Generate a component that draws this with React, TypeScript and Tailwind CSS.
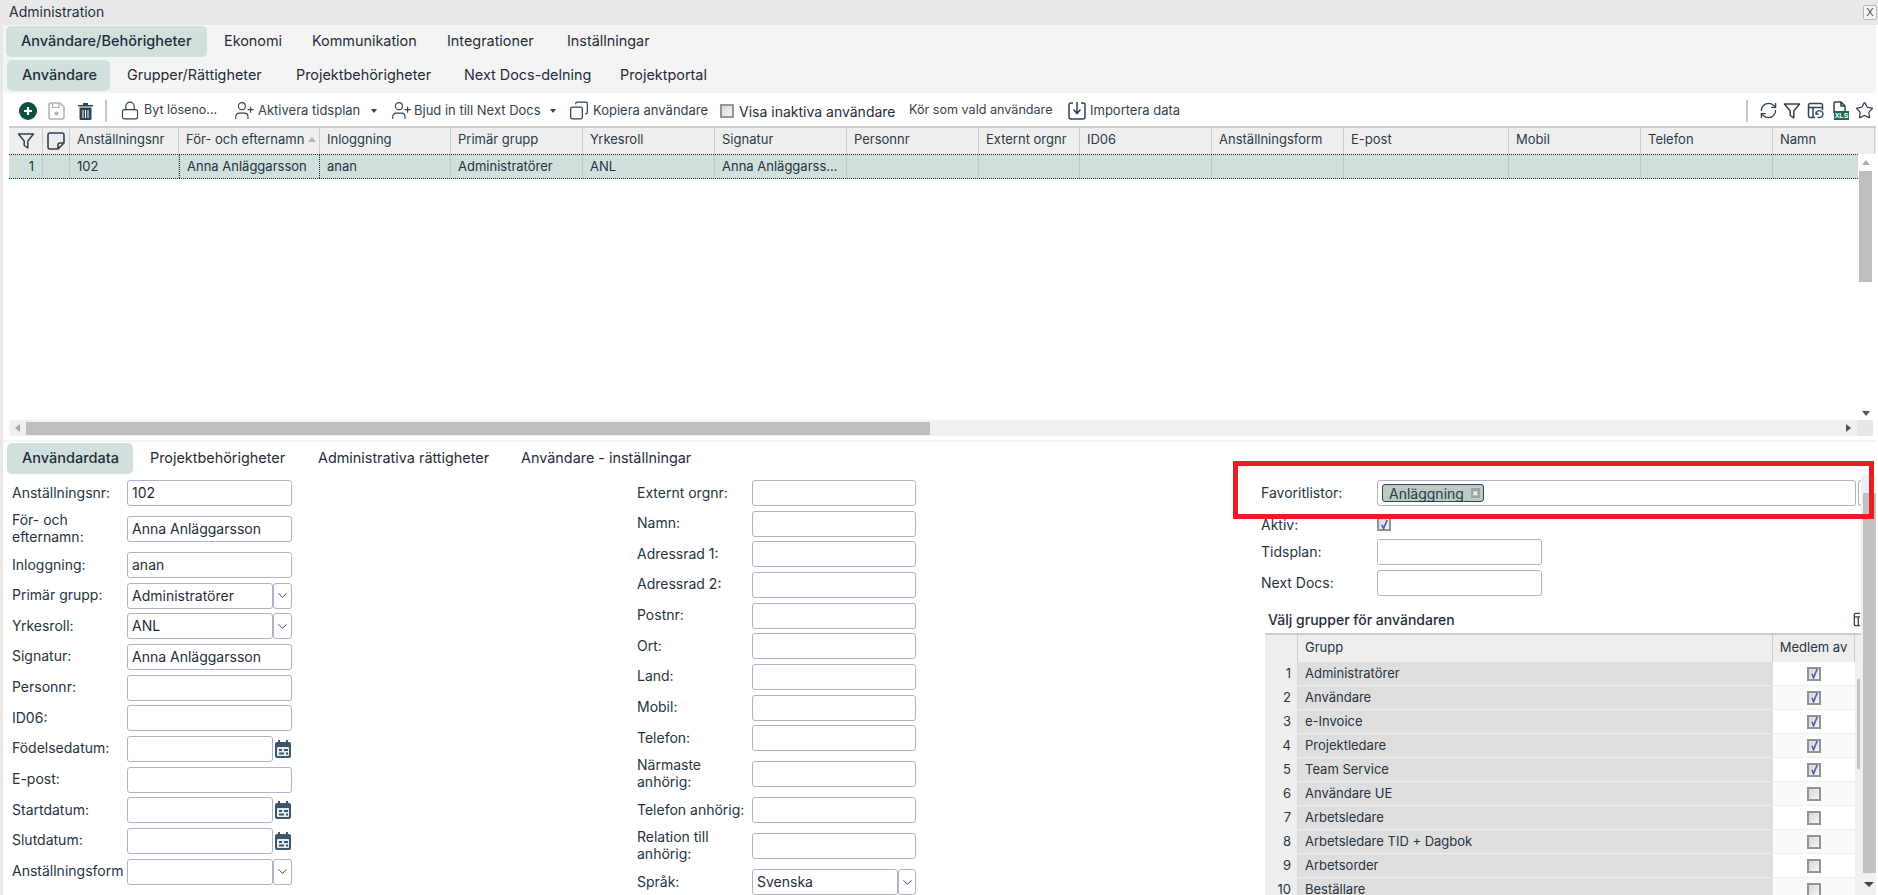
import { ChevronDown, Lock, UserPlus, Copy, RefreshCw, Star } from 'lucide-react';

const gridCols = [
  { label: 'Anställningsnr', value: '102', cls: 'w-[109px]' },
  { label: 'För- och efternamn', value: 'Anna Anläggarsson', cls: 'w-[141px]', sorted: true },
  { label: 'Inloggning', value: 'anan', cls: 'w-[131px]' },
  { label: 'Primär grupp', value: 'Administratörer', cls: 'w-[132px]' },
  { label: 'Yrkesroll', value: 'ANL', cls: 'w-[132px]' },
  { label: 'Signatur', value: 'Anna Anläggarss...', cls: 'w-[132px]' },
  { label: 'Personnr', value: '', cls: 'w-[132px]' },
  { label: 'Externt orgnr', value: '', cls: 'w-[101px]' },
  { label: 'ID06', value: '', cls: 'w-[132px]' },
  { label: 'Anställningsform', value: '', cls: 'w-[132px]' },
  { label: 'E-post', value: '', cls: 'w-[165px]' },
  { label: 'Mobil', value: '', cls: 'w-[132px]' },
  { label: 'Telefon', value: '', cls: 'w-[132px]' },
  { label: 'Namn', value: '', cls: 'w-[102px]' },
];

const groups = [
  { name: 'Administratörer', on: true },
  { name: 'Användare', on: true },
  { name: 'e-Invoice', on: true },
  { name: 'Projektledare', on: true },
  { name: 'Team Service', on: true },
  { name: 'Användare UE', on: false },
  { name: 'Arbetsledare', on: false },
  { name: 'Arbetsledare TID + Dagbok', on: false },
  { name: 'Arbetsorder', on: false },
  { name: 'Beställare', on: false },
];

type FieldKind = 'text' | 'select' | 'date';

const leftFields: { label: string; value?: string; kind?: FieldKind; tall?: boolean }[] = [
  { label: 'Anställningsnr:', value: '102', tall: true },
  { label: 'För- och efternamn:', value: 'Anna Anläggarsson', tall: true },
  { label: 'Inloggning:', value: 'anan' },
  { label: 'Primär grupp:', value: 'Administratörer', kind: 'select' },
  { label: 'Yrkesroll:', value: 'ANL', kind: 'select' },
  { label: 'Signatur:', value: 'Anna Anläggarsson' },
  { label: 'Personnr:' },
  { label: 'ID06:' },
  { label: 'Födelsedatum:', kind: 'date' },
  { label: 'E-post:' },
  { label: 'Startdatum:', kind: 'date' },
  { label: 'Slutdatum:', kind: 'date' },
  { label: 'Anställningsform', kind: 'select' },
];

const midFields: { label: string; value?: string; kind?: FieldKind; tall?: boolean }[] = [
  { label: 'Externt orgnr:' },
  { label: 'Namn:' },
  { label: 'Adressrad 1:' },
  { label: 'Adressrad 2:' },
  { label: 'Postnr:' },
  { label: 'Ort:' },
  { label: 'Land:' },
  { label: 'Mobil:' },
  { label: 'Telefon:', tall: true },
  { label: 'Närmaste anhörig:', tall: true },
  { label: 'Telefon anhörig:', tall: true },
  { label: 'Relation till anhörig:', tall: true },
  { label: 'Språk:', value: 'Svenska', kind: 'select' },
];

function Tab({ label, cls, active }: { label: string; cls: string; active?: boolean }) {
  return (
    <div
      className={`${cls} h-[31px] flex items-center pl-[15px] pb-[1px] whitespace-nowrap rounded-[5px] ${
        active ? 'bg-[#d2e0dd] font-medium text-[14.5px]' : 'text-[14.4px]'
      }`}
    >
      {label}
    </div>
  );
}

function CheckBox({ checked }: { checked?: boolean }) {
  return (
    <div className="w-[14px] h-[14px] shrink-0 border-2 border-[#939393] bg-gradient-to-br from-[#d6d6d6] to-[#f5f5f5] flex items-center justify-center">
      {checked && (
        <svg viewBox="0 0 10 12" className="w-[9px] h-[11px]">
          <path d="M2 6.5 L4 10.5 L8 1" fill="none" stroke="#4b62ad" strokeWidth="1.9" />
        </svg>
      )}
    </div>
  );
}

function CalendarIcon() {
  return (
    <svg viewBox="0 0 16 18" className="w-[16px] h-[18px] ml-[2px] mt-[4px] shrink-0">
      <rect x="0" y="2" width="16" height="16" rx="2" fill="#3e566b" />
      <rect x="3" y="0" width="2" height="4" fill="#3e566b" />
      <rect x="11" y="0" width="2" height="4" fill="#3e566b" />
      <rect x="2" y="7" width="12" height="9" rx="1" fill="#e8edf0" />
      <rect x="4" y="9" width="3" height="2" fill="#3e566b" />
      <rect x="9" y="9" width="4" height="2" fill="#3e566b" />
      <rect x="4" y="12.5" width="5" height="2" fill="#3e566b" />
      <rect x="11" y="12.5" width="2" height="2" fill="#3e566b" />
    </svg>
  );
}

function Box({ value, cls }: { value?: string; cls: string }) {
  return (
    <div className={`${cls} h-[26px] shrink-0 border border-[#b0b3c6] rounded-[3px] bg-white pl-[4px] pb-[1px] flex items-center whitespace-nowrap overflow-hidden text-[14px]`}>
      {value}
    </div>
  );
}

function Field({ label, value, kind = 'text', tall, wide }: { label: string; value?: string; kind?: FieldKind; tall?: boolean; wide?: boolean }) {
  return (
    <div className={`flex items-start ${tall ? 'h-[36px]' : 'h-[30.67px]'}`}>
      <div className="w-[115px] h-[26px] shrink-0 flex items-center pb-[2px]">
        <div className="leading-[17px] w-[115px] text-[#26343f]">{label}</div>
      </div>
      {kind === 'text' && <Box value={value} cls={wide ? 'w-[165px]' : 'w-[164px]'} />}
      {kind === 'date' && (
        <>
          <Box value={value} cls="w-[146px]" />
          <CalendarIcon />
        </>
      )}
      {kind === 'select' && (
        <>
          <Box value={value} cls="w-[146px]" />
          <div className={`${wide ? 'w-[19px]' : 'w-[18px]'} h-[26px] shrink-0 border border-[#b0b3c6] rounded-[3px] flex items-center justify-center`}>
            <ChevronDown className="w-[15px] h-[15px] text-[#2f4354]" strokeWidth={1.5} />
          </div>
        </>
      )}
    </div>
  );
}

function FunnelIcon({ cls }: { cls: string }) {
  return (
    <svg viewBox="0 0 18 18" className={cls}>
      <path d="M1.5 2 H16.5 L10.8 9 V16 L7.2 13.5 V9 Z" fill="none" stroke="#2f4354" strokeWidth="1.5" strokeLinejoin="round" />
    </svg>
  );
}

function Caret() {
  return <div className="shrink-0 w-0 h-0 border-l-[3px] border-r-[3px] border-t-[4px] border-l-transparent border-r-transparent border-t-[#2f4354]" />;
}

function TableViewIcon({ cls }: { cls: string }) {
  return (
    <svg viewBox="0 0 17 17" className={cls}>
      <path d="M8 15.5 H3 a1.5 1.5 0 0 1 -1.5 -1.5 V3 A1.5 1.5 0 0 1 3 1.5 H14 A1.5 1.5 0 0 1 15.5 3 V8" fill="none" stroke="#2f4354" strokeWidth="1.5" />
      <path d="M1.5 5.5 H15.5 M6 5.5 V15" fill="none" stroke="#2f4354" strokeWidth="1.5" />
      <path d="M9 11.5 a3.5 3.5 0 1 1 1.5 3.5 M9 9.5 v2.5 h2.5" fill="none" stroke="#2f4354" strokeWidth="1.3" />
    </svg>
  );
}

function Toolbar() {
  return (
    <div className="h-[33px] pt-[2px] flex items-center text-[13px] text-[#34434f]">
      <svg viewBox="0 0 18 18" className="ml-[16px] w-[18px] h-[18px] shrink-0">
        <circle cx="9" cy="9" r="9" fill="#0f4f45" />
        <path d="M9 5 V13 M5 9 H13" stroke="#fff" strokeWidth="2.2" />
      </svg>
      <svg viewBox="0 0 17 18" className="ml-[11px] w-[17px] h-[18px] shrink-0">
        <path d="M1 3 a2 2 0 0 1 2 -2 H12 L16 5 V15 a2 2 0 0 1 -2 2 H3 a2 2 0 0 1 -2 -2 Z" fill="none" stroke="#aab2b8" strokeWidth="1.5" />
        <path d="M4.5 1.5 V5.5 H11 V1.5" fill="none" stroke="#aab2b8" strokeWidth="1.2" />
        <circle cx="8.5" cy="11.5" r="2" fill="#aab2b8" />
      </svg>
      <svg viewBox="0 0 15 18" className="ml-[13px] w-[15px] h-[18px] shrink-0">
        <path d="M0 3 H15 V4.5 H0 Z M5 1 H10 V3 H5 Z" fill="#2f4354" />
        <path d="M1.5 5.5 H13.5 V16.5 a1.5 1.5 0 0 1 -1.5 1.5 H3 a1.5 1.5 0 0 1 -1.5 -1.5 Z" fill="#2f4354" />
        <path d="M5 8 V16 M7.5 8 V16 M10 8 V16" stroke="#fff" strokeWidth="1" />
      </svg>
      <div className="ml-[12px] w-[2px] h-[22px] bg-[#c8c8c8] shrink-0" />
      <Lock className="ml-[13px] w-[20px] h-[21px] shrink-0 text-[#2f4354]" strokeWidth={1.4} />
      <div className="ml-[4px] w-[73px] whitespace-nowrap text-[12.5px]">Byt löseno...</div>
      <UserPlus className="ml-[17px] w-[21px] h-[21px] shrink-0 text-[#2f4354]" strokeWidth={1.3} />
      <div className="ml-[3px] w-[103px] whitespace-nowrap">Aktivera tidsplan</div>
      <div className="ml-[10px]"><Caret /></div>
      <UserPlus className="ml-[14px] w-[21px] h-[21px] shrink-0 text-[#2f4354]" strokeWidth={1.3} />
      <div className="ml-[2px] w-[125px] whitespace-nowrap">Bjud in till Next Docs</div>
      <div className="ml-[11px]"><Caret /></div>
      <Copy className="ml-[13px] w-[20px] h-[21px] shrink-0 text-[#2f4354] -scale-x-100" strokeWidth={1.5} />
      <div className="ml-[4px] w-[113px] whitespace-nowrap">Kopiera användare</div>
      <div className="ml-[14px]"><CheckBox /></div>
      <div className="ml-[5px] w-[155px] whitespace-nowrap text-[14px] pt-[2px] text-[#1f2d3a]">Visa inaktiva användare</div>
      <div className="ml-[15px] w-[145px] whitespace-nowrap text-[12.6px]">Kör som vald användare</div>
      <svg viewBox="0 0 18 20" className="ml-[14px] w-[18px] h-[20px] shrink-0">
        <path d="M5 2 H3 a2 2 0 0 0 -2 2 V16 a2 2 0 0 0 2 2 H15 a2 2 0 0 0 2 -2 V4 a2 2 0 0 0 -2 -2 H13" fill="none" stroke="#2f4354" strokeWidth="1.5" />
        <path d="M9 1 V12 M5.5 8.5 L9 12.5 L12.5 8.5" fill="none" stroke="#2f4354" strokeWidth="1.5" />
      </svg>
      <div className="ml-[4px] w-[91px] whitespace-nowrap">Importera data</div>
      <div className="flex-1" />
      <div className="w-[2px] h-[22px] bg-[#c8c8c8] shrink-0" />
      <RefreshCw className="ml-[11px] w-[19px] h-[19px] shrink-0 text-[#2f4354]" strokeWidth={1.6} />
      <FunnelIcon cls="ml-[5px] w-[18px] h-[18px] shrink-0" />
      <TableViewIcon cls="ml-[6px] w-[17px] h-[17px] shrink-0" />
      <svg viewBox="0 0 17 19" className="ml-[8px] w-[17px] h-[19px] shrink-0">
        <path d="M2 12 V2 a1 1 0 0 1 1 -1 H9 L13 5 V10 M9 1 V5 H13" fill="none" stroke="#2f4354" strokeWidth="1.5" />
        <rect x="2" y="10" width="15" height="9" fill="#1d6a54" />
        <text x="9.5" y="17.2" fontSize="7" fontFamily="Liberation Sans" fontWeight="700" fill="#fff" textAnchor="middle">XLS</text>
      </svg>
      <Star className="ml-[6px] mr-[2px] w-[19px] h-[19px] shrink-0 text-[#2f4354]" strokeWidth={1.6} />
    </div>
  );
}

function DataGrid() {
  return (
    <div className="ml-[6px] flex flex-col">
      <div className="h-[28px] flex border-t-2 border-[#cccccc] bg-[#eeeeee] text-[13px] text-[#2b3a46]">
        <div className="w-[34px] shrink-0 border-r border-[#cccccc] flex items-center justify-center">
          <FunnelIcon cls="w-[18px] h-[18px]" />
        </div>
        <div className="w-[27px] shrink-0 border-r border-[#cccccc] flex items-center justify-center">
          <svg viewBox="0 0 18 18" className="w-[18px] h-[18px]">
            <path d="M3 1 H15 a2 2 0 0 1 2 2 V11 L11 17 H3 a2 2 0 0 1 -2 -2 V3 a2 2 0 0 1 2 -2 Z M11 17 V13 a2 2 0 0 1 2 -2 H17" fill="none" stroke="#2f4354" strokeWidth="1.6" />
          </svg>
        </div>
        {gridCols.map((c) => (
          <div key={c.label} className={`${c.cls} shrink-0 border-r border-[#cccccc] flex items-center pl-[7px] pb-[3px] whitespace-nowrap`}>
            {c.label}
            {c.sorted && <div className="ml-[4px] w-0 h-0 border-l-[4px] border-r-[4px] border-b-[5px] border-l-transparent border-r-transparent border-b-[#b5b5b5]" />}
          </div>
        ))}
      </div>
      <div className="h-[266px] flex">
        <div className="w-[1849px] shrink-0 overflow-hidden">
          <div className="h-[25px] flex bg-[#d2e0dd] border-y border-dotted border-[#12332c] text-[13px] text-[#24333d]">
            <div className="w-[34px] shrink-0 border-r border-[#bfc9c6] flex items-center justify-end pr-[8px]">1</div>
            <div className="w-[27px] shrink-0 border-r border-[#bfc9c6]" />
            {gridCols.map((c) => (
              <div
                key={c.label}
                className={`${c.cls} shrink-0 flex items-center pl-[7px] whitespace-nowrap ${
                  c.sorted ? 'border-x border-dotted border-[#12332c]' : 'border-r border-[#bfc9c6]'
                }`}
              >
                {c.value}
              </div>
            ))}
          </div>
        </div>
        <div className="w-[15px] shrink-0 flex flex-col items-center">
          <div className="h-[17px] flex items-center justify-center shrink-0">
            <div className="w-0 h-0 border-l-[4px] border-r-[4px] border-b-[5px] border-l-transparent border-r-transparent border-b-[#b0b0b0]" />
          </div>
          <div className="w-[13px] h-[111px] bg-[#bebebe] shrink-0" />
          <div className="flex-1" />
          <div className="h-[14px] flex items-center justify-center shrink-0">
            <div className="w-0 h-0 border-l-[4px] border-r-[4px] border-t-[5px] border-l-transparent border-r-transparent border-t-[#555555]" />
          </div>
        </div>
      </div>
      <div className="h-[16px] flex">
        <div className="w-[1848px] shrink-0 bg-[#f0f0f0] flex items-center">
          <div className="w-[17px] flex justify-center shrink-0">
            <div className="w-0 h-0 border-t-[4px] border-b-[4px] border-r-[5px] border-t-transparent border-b-transparent border-r-[#a8a8a8]" />
          </div>
          <div className="w-[904px] h-[13px] bg-[#bebebe] shrink-0" />
          <div className="flex-1" />
          <div className="w-0 h-0 border-t-[4px] border-b-[4px] border-l-[5px] border-t-transparent border-b-transparent border-l-[#555555] mr-[6px]" />
        </div>
        <div className="w-[16px] shrink-0 bg-[#e6e6e6]" />
      </div>
    </div>
  );
}

function RightColumn() {
  return (
    <div className="ml-[345px] flex-1 min-w-0">
      <div className="flex items-start h-[37px]">
        <div className="w-[116px] h-[26px] shrink-0 flex items-center pb-[2px] text-[#26343f]">Favoritlistor:</div>
        <div className="w-[479px] h-[26px] shrink-0 border border-[#b0b3c6] rounded-[3px] flex items-center pl-[4px]">
          <div className="h-[18px] w-[102px] bg-[#bccac6] border border-[#2c4a44] rounded-[3px] flex items-center pl-[6px] text-[#2b3a46] whitespace-nowrap">
            Anläggning
            <span className="ml-[7px] w-[9px] h-[10px] bg-[#9ea6a4] text-white text-[9px] leading-[10px] text-center font-bold">×</span>
          </div>
        </div>
        <div className="ml-[2px] w-[4px] h-[26px] shrink-0 border border-r-0 border-[#b0b3c6] rounded-l-[3px]" />
      </div>
      <div className="flex items-start h-[22px]">
        <div className="w-[116px] h-[14px] shrink-0 flex items-center text-[#26343f]">Aktiv:</div>
        <CheckBox checked />
      </div>
      <div className="flex items-start h-[31px]">
        <div className="w-[116px] h-[26px] shrink-0 flex items-center pb-[2px] text-[#26343f]">Tidsplan:</div>
        <Box cls="w-[165px]" />
      </div>
      <div className="flex items-start h-[31px]">
        <div className="w-[116px] h-[26px] shrink-0 flex items-center pb-[2px] text-[#26343f]">Next Docs:</div>
        <Box cls="w-[165px]" />
      </div>
      <div className="ml-[4px] h-[32px] pt-[4px] flex items-center">
        <div className="ml-[3px] font-medium whitespace-nowrap text-[#1f2d3a]">Välj grupper för användaren</div>
        <div className="flex-1" />
        <div className="w-[7px] overflow-hidden shrink-0 mr-[1px]">
          <TableViewIcon cls="w-[15px] h-[15px] max-w-none" />
        </div>
      </div>
      <div className="ml-[4px] text-[13px] text-[#26343f]">
        <div className="h-[29px] flex border-t-2 border-[#cccccc] bg-[#eeeeee]">
          <div className="w-[33px] shrink-0 border-r border-[#cccccc]" />
          <div className="w-[475px] shrink-0 border-r border-[#cccccc] flex items-center pl-[7px] pb-[2px]">Grupp</div>
          <div className="w-[82px] shrink-0 border-r border-[#cccccc] flex items-center justify-center pb-[2px] whitespace-nowrap">Medlem av</div>
        </div>
        <div className="flex">
          <div className="w-[590px] shrink-0">
            {groups.map((g, i) => (
              <div key={g.name} className="h-[24px] flex">
                <div className="w-[33px] shrink-0 bg-[#eeeeee] border-r border-[#d8d8d8] flex items-center justify-end pr-[6px]">{i + 1}</div>
                <div className="w-[475px] shrink-0 bg-[#dedede] border-b border-[#eeeeee] flex items-center pl-[7px]">{g.name}</div>
                <div className={`w-[82px] shrink-0 border-b border-[#eeeeee] flex items-center justify-center ${i % 2 ? 'bg-[#fafafa]' : 'bg-white'}`}>
                  <CheckBox checked={g.on} />
                </div>
              </div>
            ))}
          </div>
          <div className="w-[7px] shrink-0 bg-[#f0f0f0] pl-[2px] pt-[17px]">
            <div className="w-[3px] h-[90px] bg-[#c4c4c4]" />
          </div>
        </div>
      </div>
    </div>
  );
}

export default function App() {
  return (
    <div className="relative w-[1878px] h-[895px] overflow-hidden bg-white flex flex-col font-['Inter',sans-serif] text-[14px] text-[#1f2d3a]">
      <div className="h-[25px] shrink-0 bg-[#e8e8e8] flex items-center justify-between pl-[9px] pr-[1px] text-[14px]">
        <div className="pb-[2px]">Administration</div>
        <div className="w-[14px] h-[15px] border border-[#b5b5b5] rounded-[2px] bg-[#f4f4f4] flex items-center justify-center text-[11px] text-[#555555]">X</div>
      </div>

      <div className="flex-1 min-h-0 flex flex-col border-l-[3px] border-[#e8e8e8] pr-[2px]">
        <div className="h-[68px] shrink-0 bg-[#f4f4f4] pt-[1px] flex flex-col gap-[3px]">
          <div className="flex pl-[3px]">
            <Tab label="Användare/Behörigheter" cls="w-[201px] mr-[2px]" active />
            <Tab label="Ekonomi" cls="w-[88px]" />
            <Tab label="Kommunikation" cls="w-[135px]" />
            <Tab label="Integrationer" cls="w-[120px]" />
            <Tab label="Inställningar" cls="w-[130px]" />
          </div>
          <div className="flex pl-[4px]">
            <Tab label="Användare" cls="w-[103px] mr-[2px]" active />
            <Tab label="Grupper/Rättigheter" cls="w-[169px]" />
            <Tab label="Projektbehörigheter" cls="w-[168px]" />
            <Tab label="Next Docs-delning" cls="w-[156px]" />
            <Tab label="Projektportal" cls="w-[130px]" />
          </div>
        </div>

        <Toolbar />
        <DataGrid />

        <div className="h-[4px] shrink-0" />
        <div className="h-[2px] shrink-0 bg-[#f4f4f4]" />

        <div className="flex pl-[4px] pt-[1px] shrink-0">
          <Tab label="Användardata" cls="w-[126px] mr-[2px]" active />
          <Tab label="Projektbehörigheter" cls="w-[168px]" />
          <Tab label="Administrativa rättigheter" cls="w-[203px]" />
          <Tab label="Användare - inställningar" cls="w-[190px]" />
        </div>

        <div className="flex-1 min-h-0 flex">
          <div className="flex-1 min-w-0 flex pt-[6px] pl-[9px]">
            <div className="w-[279px] shrink-0">
              {leftFields.map((f) => (
                <Field key={f.label} {...f} wide />
              ))}
            </div>
            <div className="ml-[346px] w-[279px] shrink-0">
              {midFields.map((f) => (
                <Field key={f.label} {...f} />
              ))}
            </div>
            <RightColumn />
          </div>
          <div className="w-[15px] shrink-0 mt-[1px] bg-[#f0f0f0] flex flex-col">
            <div className="h-[18px] shrink-0" />
            <div className="ml-[2px] w-[13px] h-[380px] shrink-0 bg-[#c0c0c0]" />
            <div className="flex-1 flex items-center justify-center">
              <div className="w-0 h-0 border-l-[5px] border-r-[5px] border-t-[5px] border-l-transparent border-r-transparent border-t-[#444444]" />
            </div>
          </div>
        </div>
      </div>

      <div className="absolute left-[1233px] top-[461px] w-[641px] h-[58px] border-[5px] border-[#ed1c24]" />
    </div>
  );
}
